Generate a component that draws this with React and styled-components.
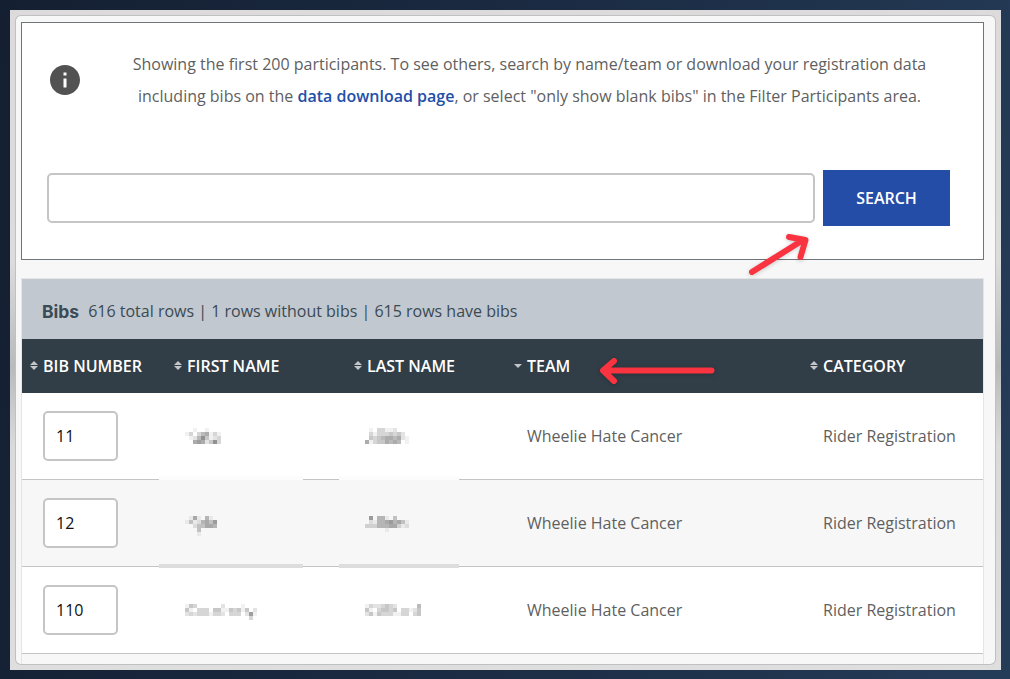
import React, { useState } from "react";
import styled, { createGlobalStyle } from "styled-components";

const GlobalStyle = createGlobalStyle`
  * {
    box-sizing: border-box;
  }
  body {
    margin: 0;
    font-family: "Open Sans", sans-serif;
    font-size: 16px;
    color: #5f5f5f;
  }
`;

const Page = styled.div`
  width: 1010px;
  height: 679px;
  padding: 10px 9px 9px 10px;
  overflow: hidden;
  background: linear-gradient(100deg, #141f31 0%, #1b2b43 50%, #253c58 100%);
`;

const Frame = styled.div`
  height: 660px;
  padding: 6px 6px 6px 6px;
  background: linear-gradient(180deg, #dcdadb 0%, #dcdcdd 38%, #b9babb 54%, #dadadb 66%, #dedede 100%);
`;

const Panel = styled.main`
  position: relative;
  height: 648px;
  padding: 6px 11px 0 5px;
  overflow: hidden;
  background: #f7f7f7;
  border-radius: 5px;
  box-shadow: 0 0 0 1px #bfc0c1;
`;

const SearchBox = styled.section`
  height: 238px;
  padding: 25px 33px 0 25px;
  background: #fff;
  border: 1px solid #70757a;
`;

const Notice = styled.div`
  display: flex;
  height: 122px;
`;

const InfoIcon = styled.svg`
  flex: none;
  width: 36px;
  height: 36px;
  margin-top: 14px;
`;

const NoticeText = styled.p`
  flex: 1;
  margin: 0 0 0 26px;
  text-align: center;
  line-height: 32px;
  white-space: nowrap;
`;

const DownloadLink = styled.a`
  color: #244fa8;
  font-weight: 600;
`;

const SearchForm = styled.form`
  display: flex;
  align-items: center;
  gap: 8px;
`;

const SearchInput = styled.input`
  flex: 1;
  height: 50px;
  padding: 0 12px;
  border: 2px solid #c5c5c5;
  border-radius: 5px;
  background: #fff;
  font: inherit;
`;

const SearchButton = styled.button`
  width: 127px;
  height: 56px;
  padding: 0;
  border: 0;
  background: #244da8;
  color: #fff;
  font: 600 16px "Open Sans", sans-serif;
`;

const TableCard = styled.section`
  width: 963px;
  height: 390px;
  margin-top: 18px;
  border: 1px solid #e5e5e5;
`;

const TableTitle = styled.header`
  display: flex;
  align-items: center;
  height: 60px;
  padding: 4px 0 0 20px;
  background: #c1c8d0;
  color: #3b4a54;
`;

const Title = styled.h2`
  margin: 0 9px 0 0;
  font: 700 17.5px Inter, sans-serif;
`;

const Row = styled.div`
  display: grid;
  grid-template-columns: 144px 180px 160px 296px 181px;
  align-items: center;
  height: 87px;
  border-bottom: 1px solid #c4c4c4;
  background: ${({ $striped }) => ($striped ? "#f7f7f7" : "#fff")};
`;

const HeadRow = styled(Row)`
  height: 54px;
  border: 0;
  background: #313e47;
  color: #fff;
  font-weight: 600;
`;

const HeadCell = styled.div`
  display: flex;
  align-items: center;
  padding-left: 7.5px;
  white-space: nowrap;
`;

const SortIcon = styled.svg`
  width: 8px;
  height: 12px;
  margin-right: 5.5px;
  fill: #c4c5c7;
`;

const Cell = styled.div`
  position: relative;
  display: flex;
  align-items: center;
  height: 86px;
  padding-left: 21px;
  white-space: nowrap;
`;

const BibInput = styled.input`
  width: 75px;
  height: 50px;
  padding: 0 11px;
  border: 2px solid #c5c5c5;
  border-radius: 5px;
  background: #fff;
  color: #111;
  font: inherit;
`;

const Mosaic = styled.svg`
  display: block;
  height: 20px;
  margin: ${({ $top }) => $top}px 0 0 -2px;
  fill: #525252;
`;

// strip that hides the row line below a redacted name
const Smear = styled.span`
  position: absolute;
  left: -7px;
  top: ${({ $y }) => $y}px;
  width: ${({ $wide }) => ($wide ? 144 : 120)}px;
  height: 4px;
  background: ${({ $tone }) => $tone};
`;

const Arrow = styled.svg`
  position: absolute;
  left: ${({ $x }) => $x}px;
  top: ${({ $y }) => $y}px;
  fill: none;
  stroke: #fa3340;
  stroke-width: 6;
  stroke-linecap: round;
  stroke-linejoin: round;
  filter: drop-shadow(0 1px 2px rgba(0, 0, 0, 0.2));
  pointer-events: none;
`;

const columns = [
  { label: "BIB NUMBER" },
  { label: "FIRST NAME" },
  { label: "LAST NAME" },
  { label: "TEAM", sorted: true },
  { label: "CATEGORY" },
];

// each digit is the darkness of one 4px block
const rows = [
  {
    bib: "11",
    first: ["001001000", "130356131", "012584123", "006762483"],
    last: ["01033112000", "03133343420", "04345665621", "61344656501"],
    smear: { $tone: "#fcfcfc", $y: 83 },
    top: 4,
  },
  {
    bib: "12",
    first: ["016105100", "141256470", "002446650", "000400000", "000100000"],
    last: ["07055104000", "02155675641", "33355566312", "00000100000"],
    smear: { $tone: "#dddddd", $y: 84 },
    top: 6,
  },
  {
    bib: "110",
    first: ["143000000200001000", "410333044114341402", "232333133203330271", "000000000000000030"],
    last: ["13223432000005", "41034434033124", "24143331133034"],
    top: 8,
  },
];

const PixelName = ({ blocks, top }) => (
  <Mosaic $top={top} width={blocks[0].length * 4} viewBox={`0 0 ${blocks[0].length * 4} 20`} shapeRendering="crispEdges">
    {blocks.map((line, y) =>
      [...line].map((shade, x) =>
        shade === "0" ? null : (
          <rect key={`${x}-${y}`} x={x * 4} y={y * 4} width="4" height="4" opacity={shade * 0.08} />
        )
      )
    )}
  </Mosaic>
);

const App = () => {
  const [query, setQuery] = useState("");

  return (
    <>
      <GlobalStyle />
      <Page>
        <Frame>
          <Panel>
            <SearchBox>
              <Notice>
                <InfoIcon viewBox="0 0 24 24" fill="#525252">
                  <path d="M12 2C6.480 2 2 6.480 2 12s4.480 10 10 10 10-4.480 10-10S17.520 2 12 2zm1 15h-2v-6h2v6zm0-8h-2V7h2v2z" />
                </InfoIcon>
                <NoticeText>
                  Showing the first 200 participants. To see others, search by name/team or download your registration data
                  <br />
                  including bibs on the <DownloadLink>data download page</DownloadLink>, or select "only show blank bibs" in the Filter Participants area.
                </NoticeText>
              </Notice>
              <SearchForm onSubmit={(e) => e.preventDefault()}>
                <SearchInput value={query} onChange={(e) => setQuery(e.target.value)} />
                <SearchButton>SEARCH</SearchButton>
              </SearchForm>
            </SearchBox>

            <TableCard>
              <TableTitle>
                <Title>Bibs</Title>
                <span>616 total rows | 1 rows without bibs | 615 rows have bibs</span>
              </TableTitle>
              <HeadRow>
                {columns.map((col) => (
                  <HeadCell key={col.label}>
                    <SortIcon viewBox="0 0 8 12">
                      {!col.sorted && <path d="M0 5 4 1l4 4z" />}
                      {col.sorted ? <path d="M0 4h8L4 8z" /> : <path d="M0 6h8L4 10z" />}
                    </SortIcon>
                    {col.label}
                  </HeadCell>
                ))}
              </HeadRow>
              {rows.map((row, i) => (
                <Row key={row.bib} $striped={i % 2 === 1}>
                  <Cell>
                    <BibInput defaultValue={row.bib} />
                  </Cell>
                  <Cell>
                    <PixelName blocks={row.first} top={row.top} />
                    {row.smear && <Smear $wide {...row.smear} />}
                  </Cell>
                  <Cell>
                    <PixelName blocks={row.last} top={row.top} />
                    {row.smear && <Smear {...row.smear} />}
                  </Cell>
                  <Cell>Wheelie Hate Cancer</Cell>
                  <Cell>Rider Registration</Cell>
                </Row>
              ))}
            </TableCard>

            <Arrow $x={730} $y={212} width="68" height="54">
              <path d="M7 44 58 12M44 9l16.500 3-5 17" transform="translate(-1 0)" />
            </Arrow>
            <Arrow $x={580} $y={336} width="124" height="36">
              <path d="M115.500 18.500H8M18 9 7 18.500 18 29" />
            </Arrow>
          </Panel>
        </Frame>
      </Page>
    </>
  );
};

export default App;
